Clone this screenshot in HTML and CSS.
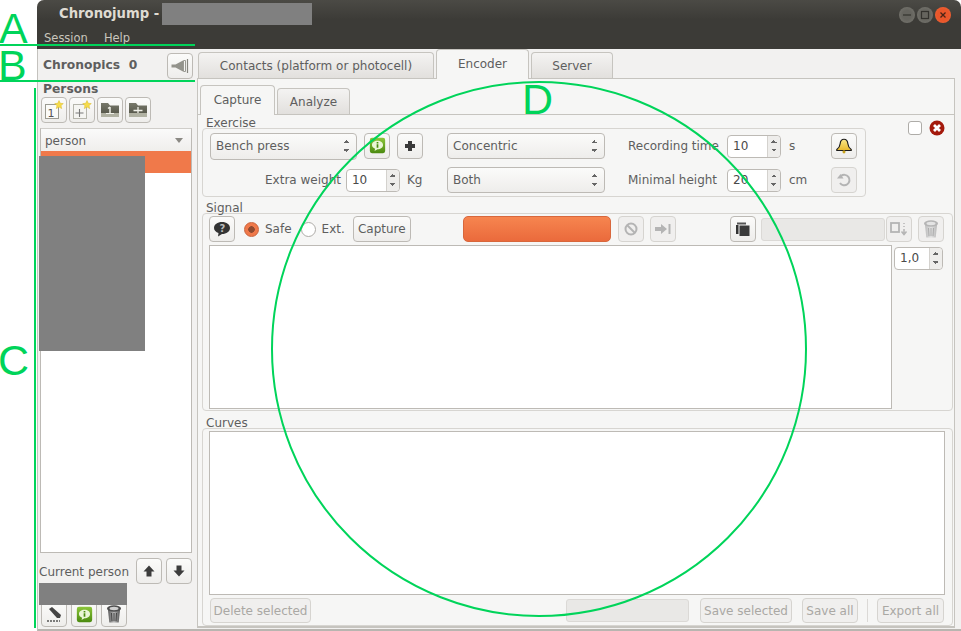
FILE: index.html
```html
<!DOCTYPE html>
<html lang="en">
<head>
    <meta charset="UTF-8">
    <title>Chronojump</title>
    <link rel="stylesheet" href="styles.css">
</head>
<body>
    <svg width="0" height="0" class="defs">
        <defs>
            <linearGradient id="olive" x1="0" y1="0" x2="0" y2="1"><stop offset="0" stop-color="#77786a"/><stop offset="1" stop-color="#4d4e42"/></linearGradient>
            <linearGradient id="gold" x1="0" y1="0" x2="0" y2="1"><stop offset="0" stop-color="#fbe98a"/><stop offset="1" stop-color="#e9b92b"/></linearGradient>
            <linearGradient id="green" x1="0" y1="0" x2="0" y2="1"><stop offset="0" stop-color="#8cc63a"/><stop offset="1" stop-color="#4b8a10"/></linearGradient>
            <linearGradient id="can" x1="0" y1="0" x2="1" y2="0"><stop offset="0" stop-color="#5a5a5a"/><stop offset="0.5" stop-color="#b5b5b5"/><stop offset="1" stop-color="#555"/></linearGradient>
            <linearGradient id="can-off" x1="0" y1="0" x2="1" y2="0"><stop offset="0" stop-color="#bcbcbc"/><stop offset="0.5" stop-color="#e2e2e2"/><stop offset="1" stop-color="#b8b8b8"/></linearGradient>
            <polygon id="star" points="15,0.500 16.300,3.300 19.300,3.600 17,5.600 17.700,8.600 15,7 12.300,8.600 13,5.600 10.700,3.600 13.700,3.300" fill="#f6dc4a" stroke="#d8b92a" stroke-width="0.500"/>
            <g id="info">
                <rect x="1" y="1" width="18" height="18" rx="2.500" fill="url(#green)"/>
                <path d="M10 4.500c3.800 0 6.500 2 6.500 5s-2.700 5-6.500 5l-3.500 2 .7-2.600C5 13 3.500 11.500 3.500 9.500c0-3 2.700-5 6.500-5z" fill="#eaf6d6"/>
                <path d="M10 6v1.500M10 8.500v4" stroke="#4b8a10" stroke-width="2"/>
            </g>
        </defs>
    </svg>

    <div id="window">
        <div id="titlebar">
            <div id="title-row">
                <span id="title">Chronojump -</span>
                <span id="title-hidden"></span>
                <div id="win-buttons">
                    <span class="win-btn"><svg width="10" height="10" viewBox="0 0 10 10"><path d="M1 5h8" stroke="#33322e" stroke-width="1.200"/></svg></span>
                    <span class="win-btn"><svg width="10" height="10" viewBox="0 0 10 10"><rect x="1.500" y="1.500" width="7" height="7" fill="none" stroke="#33322e" stroke-width="1.200"/></svg></span>
                    <span class="win-btn win-close"><svg width="10" height="10" viewBox="0 0 10 10"><path d="M2.500 2.500l5 5M7.500 2.500l-5 5" stroke="#4a2416" stroke-width="1.300"/></svg></span>
                </div>
            </div>
            <div id="menu-row"><span>Session</span><span>Help</span></div>
        </div>

        <div id="content">
            <div id="sidebar">
                <div id="chronopics-row">
                    <b>Chronopics&nbsp;&nbsp;0</b>
                    <button class="btn"><svg width="20" height="18" viewBox="0 0 20 18"><path d="M1.500 7.500h4l7.500-4v11l-7.500-4h-4z" fill="#93938c"/><path d="M13.500 3.500h2v11h-2z" fill="#f4f4f2" stroke="#9a9a93"/><path d="M17.500 2v14" stroke="#85857e" stroke-width="1.200"/></svg></button>
                </div>
                <div class="persons-title">Persons</div>
                <div class="persons-tools">
                    <button class="btn"><svg width="20" height="20" viewBox="0 0 20 20"><rect x="1.500" y="4.500" width="13" height="14" fill="#fbfbf8" stroke="#9b9b92"/><text x="3.500" y="16.500" class="icon-num">1</text><use href="#star"/></svg></button>
                    <button class="btn"><svg width="20" height="20" viewBox="0 0 20 20"><rect x="1.500" y="4.500" width="13" height="14" fill="#f5f5f2" stroke="#b5b5ac"/><path d="M7.500 9v8M3.500 13h8" stroke="#777" stroke-width="1.100"/><use href="#star"/></svg></button>
                    <button class="btn"><svg width="20" height="18" viewBox="0 0 20 18"><path d="M1 2h7l2 2.500h9V16H1z" fill="url(#olive)"/><path d="M1 12h18v4H1z" fill="#b1b2a3"/><path d="M10 6v6.500M8 7.500l2-1.500" stroke="#f0f0e8" stroke-width="1.500" fill="none"/><path d="M6 12.500h8" stroke="#f0f0e8"/></svg></button>
                    <button class="btn"><svg width="20" height="18" viewBox="0 0 20 18"><path d="M1 2h7l2 2.500h9V16H1z" fill="url(#olive)"/><path d="M1 12h18v4H1z" fill="#b1b2a3"/><path d="M10 6v6M5.500 9.500h9" stroke="#f0f0e8" stroke-width="1.300"/></svg></button>
                </div>
                <div id="person-list">
                    <div id="person-head">person<span class="arrow-down"></span></div>
                    <div id="person-selected"></div>
                </div>
                <div id="current-row">
                    <span>Current person</span>
                    <button class="btn"><svg width="14" height="14" viewBox="0 0 14 14"><path d="M7 1.500l5.500 6H9.500v5h-5v-5h-3z" fill="#3c3c3c"/></svg></button>
                    <button class="btn"><svg width="14" height="14" viewBox="0 0 14 14"><path d="M7 12.500l-5.500-6h3v-5h5v5h3z" fill="#3c3c3c"/></svg></button>
                </div>
                <div id="current-hidden"></div>
                <div id="current-tools">
                    <button class="btn"><svg width="20" height="20" viewBox="0 0 20 20"><path d="M5 5l3-2 9 8-1 3-3 0z" fill="#444"/><path d="M3 17h13" stroke="#555" stroke-dasharray="2 1" stroke-width="1.500"/></svg></button>
                    <button class="btn"><svg width="17" height="17" viewBox="0 0 20 20"><use href="#info"/></svg></button>
                    <button class="btn"><svg width="18" height="20" viewBox="0 0 18 20"><path d="M3 6h12l-1.300 12.500H4.300z" fill="url(#can)"/><ellipse cx="9" cy="4.500" rx="7" ry="3.200" fill="#4e4e4e"/><ellipse cx="9" cy="4.500" rx="4.500" ry="1.700" fill="#cfcfcf"/><path d="M6.500 9l.5 8M9 9v8M11.500 9l-.5 8" stroke="#444"/></svg></button>
                </div>
            </div>

            <div id="main">
                <div class="tabs">
                    <span class="tab tab-contacts">Contacts (platform or photocell)</span>
                    <span class="tab tab-active tab-encoder">Encoder</span>
                    <span class="tab tab-server">Server</span>
                </div>
                <div id="encoder-page">
                    <div class="tabs sub-tabs">
                        <span class="tab tab-active tab-capture">Capture</span>
                        <span class="tab tab-analyze">Analyze</span>
                    </div>
                    <div id="capture-page">
                        <div class="frame-title">Exercise</div>
                        <div id="exercise-line">
                            <div class="frame" id="exercise">
                                <div class="ex-left">
                                    <div class="combo combo-bench">Bench press<span class="updown"></span></div>
                                    <button class="btn"><svg width="17" height="17" viewBox="0 0 20 20"><use href="#info"/></svg></button>
                                    <button class="btn"><svg width="14" height="14" viewBox="0 0 14 14"><path d="M5 2h4v3h3v4H9v3H5V9H2V5h3z" fill="#3a3a3a"/></svg></button>
                                </div>
                                <div class="combo">Concentric<span class="updown"></span></div>
                                <label class="ex-label">Recording time</label>
                                <div class="spin"><span class="spin-value">10</span><span class="spin-arrows"></span></div>
                                <span class="unit">s</span>
                                <button class="btn"><svg width="18" height="18" viewBox="0 0 20 20"><path d="M10 2.500c3 0 4 2 4.300 5 .3 3 1.200 4.800 3.700 6.500v1H2v-1c2.500-1.700 3.400-3.500 3.700-6.500.3-3 1.300-5 4.300-5z" fill="url(#gold)" stroke="#1c1c1c" stroke-width="1.300"/><circle cx="10" cy="16.500" r="1.700" fill="#c9a21c"/></svg></button>

                                <div class="ex-left ex-weight">
                                    <label>Extra weight</label>
                                    <div class="spin"><span class="spin-value">10</span><span class="spin-arrows"></span></div>
                                    <span class="unit unit-kg">Kg</span>
                                </div>
                                <div class="combo">Both<span class="updown"></span></div>
                                <label class="ex-label">Minimal height</label>
                                <div class="spin"><span class="spin-value">20</span><span class="spin-arrows"></span></div>
                                <span class="unit">cm</span>
                                <button class="btn btn-off"><svg width="16" height="16" viewBox="0 0 16 16"><path d="M5 4a5.200 5.200 0 1 1 -1 7" fill="none" stroke="#b4b4b4" stroke-width="2"/><path d="M1 6.500l6.500 0-3-4.500z" fill="#b4b4b4"/></svg></button>
                            </div>
                            <div id="corner-tools">
                                <span class="check"></span>
                                <svg width="16" height="16" viewBox="0 0 16 16"><circle cx="8" cy="8" r="7.500" fill="#a41a0c"/><path d="M5 5l6 6M11 5l-6 6" stroke="#fff" stroke-width="2.800"/></svg>
                            </div>
                        </div>

                        <div class="frame-title frame-next">Signal</div>
                        <div class="frame" id="signal">
                            <div class="signal-bar">
                                <button class="btn"><svg width="18" height="16" viewBox="0 0 18 16"><path d="M9 1c4.500 0 8 2.500 8 6s-3.500 6-8 6l-4 2.500.5-3.500C3 11 1 9.500 1 7c0-3.500 3.500-6 8-6z" fill="#333"/><text x="6.500" y="11" class="icon-q">?</text></svg></button>
                                <span class="radio radio-on"></span><span class="radio-label">Safe</span>
                                <span class="radio"></span><span class="radio-label">Ext.</span>
                                <button class="btn btn-text btn-capture">Capture</button>
                                <span id="capture-bar"></span>
                                <button class="btn btn-off"><svg width="16" height="16" viewBox="0 0 16 16"><circle cx="8" cy="8" r="5.500" fill="none" stroke="#b4b4b4" stroke-width="2"/><path d="M4 4l8 8" stroke="#b4b4b4" stroke-width="2"/></svg></button>
                                <button class="btn btn-off"><svg width="18" height="14" viewBox="0 0 18 14"><path d="M1 5h6V2l6 5-6 5V9H1z" fill="#b4b4b4"/><path d="M15.500 2v10" stroke="#b4b4b4" stroke-width="2"/></svg></button>
                                <button class="btn btn-folder"><svg width="16" height="16" viewBox="0 0 16 16"><path d="M2 1.500h9v2H2z" fill="#555"/><rect x="1" y="4" width="2.500" height="9" fill="#333"/><rect x="4.500" y="4.500" width="10" height="10.500" fill="#3a3a3a"/></svg></button>
                                <span class="empty-bar" id="signal-entry"></span>
                                <button class="btn btn-off"><svg width="18" height="16" viewBox="0 0 18 16"><rect x="1" y="2" width="8" height="9" fill="none" stroke="#b4b4b4" stroke-width="1.800"/><path d="M14 2v1M14 5v1M14 8v4M11.500 10.500l2.500 3 2.500-3" stroke="#b4b4b4" stroke-width="1.500" fill="none"/></svg></button>
                                <button class="btn btn-off"><svg width="18" height="20" viewBox="0 0 18 20"><path d="M3 6h12l-1.300 12.500H4.300z" fill="url(#can-off)"/><ellipse cx="9" cy="4.500" rx="7" ry="3.200" fill="#b5b5b5"/><ellipse cx="9" cy="4.500" rx="4.500" ry="1.700" fill="#e4e4e4"/><path d="M6.500 9l.5 8M9 9v8M11.500 9l-.5 8" stroke="#aaa"/></svg></button>
                            </div>
                            <div class="signal-body">
                                <div class="view" id="signal-view"></div>
                                <div class="spin spin-zoom"><span class="spin-value">1,0</span><span class="spin-arrows"></span></div>
                            </div>
                        </div>

                        <div class="frame-title frame-last">Curves</div>
                        <div class="frame" id="curves">
                            <div class="view" id="curves-view"></div>
                            <div class="curves-bar">
                                <button class="btn btn-text btn-off btn-delete">Delete selected</button>
                                <span class="empty-bar" id="curves-entry"></span>
                                <button class="btn btn-text btn-off btn-save-sel">Save selected</button>
                                <button class="btn btn-text btn-off btn-save-all">Save all</button>
                                <span class="vsep"></span>
                                <button class="btn btn-text btn-off btn-export">Export all</button>
                            </div>
                        </div>
                    </div>
                </div>
            </div>
        </div>
    </div>

    <!-- redaction and green notes lie over the window -->
    <div id="hidden-list"></div>
    <svg id="marks" width="961" height="631" viewBox="0 0 961 631">
        <path d="M0 45h195M0 81h195" stroke="#00d45a" stroke-width="2"/>
        <path d="M35 88v540" stroke="#00d45a" stroke-width="2"/>
        <circle cx="539" cy="349" r="267" fill="none" stroke="#00d45a" stroke-width="2"/>
    </svg>
    <span class="mark" id="mark-a">A</span>
    <span class="mark" id="mark-b">B</span>
    <span class="mark" id="mark-c">C</span>
    <span class="mark" id="mark-d">D</span>
</body>
</html>
```

FILE: styles.css
```css
* {
    box-sizing: border-box;
}

body {
    margin: 0;
    width: 961px;
    height: 631px;
    overflow: hidden;
    background: #fff;
    font-family: "DejaVu Sans", sans-serif;
    font-size: 12px;
    color: #5e5e5e;
}

.defs {
    position: absolute;
}

#window {
    margin-left: 37px;
    width: 924px;
    height: 631px;
    display: flex;
    flex-direction: column;
    background: #f2f1f0;
    border-radius: 7px 7px 0 0;
    border-bottom: 2px solid #b8b5b0;
    border-left: 1px solid #c4c2be;
}

#titlebar {
    height: 49px;
    margin-left: -1px;
    background: linear-gradient(#4b4a45, #3c3b37 40%);
    color: #dfdbd2;
    border-radius: 7px 7px 0 0;
}

#title-row {
    height: 27px;
    display: flex;
    align-items: center;
    padding-left: 22px;
}

#title {
    font-weight: bold;
    font-size: 13.200px;
}

#title-hidden {
    width: 150px;
    height: 22px;
    margin-left: 3px;
    background: #808080;
}

#win-buttons {
    margin: 3px 10px 0 auto;
    display: flex;
    gap: 2px;
}

.win-btn {
    width: 16px;
    height: 16px;
    border-radius: 50%;
    background: radial-gradient(circle, #65645e 40%, #7a7972);
    display: flex;
    align-items: center;
    justify-content: center;
}

.win-close {
    background: radial-gradient(circle, #e9562a 50%, #f0683a);
}

#menu-row {
    display: flex;
    gap: 16px;
    padding-left: 7px;
    font-size: 11.500px;
    color: #c9c6bd;
    line-height: 22px;
}

#content {
    flex: 1;
    display: flex;
    min-height: 0;
}

#sidebar {
    width: 159px;
    flex: none;
    padding-left: 1px;
}

#chronopics-row {
    height: 31px;
    display: flex;
    align-items: center;
    justify-content: space-between;
    padding: 2px 4px 0 4px;
}

#chronopics-row b {
    font-size: 12.300px;
    margin-top: -2px;
}

.btn {
    width: 26px;
    height: 26px;
    padding: 0;
    flex: none;
    display: inline-flex;
    align-items: center;
    justify-content: center;
    background: linear-gradient(#fbfbfa, #eeedeb);
    border: 1px solid #bdbab5;
    border-radius: 4px;
    font: inherit;
    color: inherit;
}

.btn-text {
    width: auto;
}

.btn-off {
    background: #f0efee;
    border-color: #d6d4d0;
    color: #aaa8a4;
}

.persons-title {
    font-weight: bold;
    font-size: 12.300px;
    line-height: 16px;
    padding: 1px 0 0 4px;
    height: 17px;
}

.persons-tools {
    display: flex;
    gap: 2px;
    padding-left: 2px;
}

#person-list {
    width: 152px;
    height: 425px;
    margin: 5px 0 0 1px;
    background: #fff;
    border: 1px solid #bdbab5;
    border-top-color: #cfcdc9;
}

#person-head {
    height: 22px;
    line-height: 22px;
    padding: 1px 8px 0 4px;
    display: flex;
    justify-content: space-between;
    align-items: center;
    background: linear-gradient(#fafafa, #efeeec);
}

.arrow-down {
    border: 4px solid transparent;
    border-top: 5px solid #8b8984;
    border-bottom: 0;
}

#person-selected {
    height: 22px;
    background: #f0794a;
}

#current-row {
    display: flex;
    align-items: center;
    margin-top: 5px;
}

#current-row span {
    width: 97px;
    margin-top: 2px;
    white-space: nowrap;
}

#current-row .btn + .btn {
    margin-left: 4px;
}

#current-hidden {
    width: 88px;
    height: 22px;
    margin-top: -1px;
    background: #808080;
    position: relative;
    z-index: 1;
}

#current-tools {
    display: flex;
    gap: 4px;
    padding-left: 2px;
    margin-top: -4px;
}

#main {
    width: 758px;
}

.tabs {
    display: flex;
    align-items: flex-end;
    height: 29px;
    margin-left: 1px;
}

.tab {
    height: 26px;
    line-height: 26px;
    text-align: center;
    background: linear-gradient(#f4f3f2, #e2e0dd);
    border: 1px solid #c6c4bf;
    border-bottom: 0;
    border-radius: 4px 4px 0 0;
    margin-right: 2px;
}

.tab-active {
    height: 30px;
    line-height: 28px;
    background: #f6f6f5;
    position: relative;
    z-index: 1;
    margin-bottom: -1px;
}

.tab-contacts {
    width: 236px;
}

.tab-encoder {
    width: 93px;
}

.tab-server {
    width: 82px;
}

.sub-tabs {
    margin-left: 2px;
    margin-top: 6px;
}

.tab-capture {
    width: 75px;
}

.tab-analyze {
    width: 73px;
}

#encoder-page {
    height: 550px;
    background: #f6f6f5;
    border: 1px solid #c6c4bf;
    border-bottom: 2px solid #c6c4bf;
}

#capture-page {
    border-top: 1px solid #c6c4bf;
    padding: 2px 0 0 4px;
}

.frame-title {
    height: 12px;
    line-height: 12px;
    margin: 0 0 -1px 4px;
    position: relative;
    z-index: 1;
}

.frame-next {
    margin-top: 5px;
}

.frame-last {
    margin-top: 6px;
}

.frame {
    border: 1px solid #d7d5d1;
    border-radius: 4px;
}

#exercise-line {
    display: flex;
}

#exercise {
    width: 664px;
    height: 69px;
    display: grid;
    grid-template-columns: 237px 158px 122px 54px 50px 26px;
    grid-template-rows: 26px 26px;
    row-gap: 8px;
    align-items: center;
    padding: 4px 0 0 7px;
}

.ex-left {
    display: flex;
    gap: 7px;
}

.ex-weight {
    align-items: center;
    gap: 5px;
    padding-left: 55px;
}

.ex-label {
    margin-left: 23px;
    white-space: nowrap;
}

.unit {
    margin-left: 8px;
}

.unit-kg {
    margin-left: 2px;
}

.combo {
    height: 26px;
    padding: 0 7px 0 5px;
    display: flex;
    align-items: center;
    justify-content: space-between;
    background: linear-gradient(#fbfbfa, #eeedeb);
    border: 1px solid #bdbab5;
    border-radius: 4px;
}

.combo-bench {
    width: 147px;
    height: 27px;
}

.updown {
    width: 6px;
    height: 12px;
    background:
        linear-gradient(135deg, transparent 50%, #666 50%) left top / 3px 3px no-repeat,
        linear-gradient(225deg, transparent 50%, #666 50%) right top / 3px 3px no-repeat,
        linear-gradient(45deg, transparent 50%, #666 50%) left bottom / 3px 3px no-repeat,
        linear-gradient(315deg, transparent 50%, #666 50%) right bottom / 3px 3px no-repeat;
}

.spin {
    width: 54px;
    height: 23px;
    display: flex;
    background: #fff;
    border: 1px solid #bdbab5;
    border-radius: 4px;
}

.spin-value {
    flex: 1;
    line-height: 21px;
    padding-left: 5px;
    color: #4a4a4a;
}

.spin-arrows {
    width: 13px;
    background:
        linear-gradient(135deg, transparent 50%, #666 50%) 3px 4px / 3px 3px no-repeat,
        linear-gradient(225deg, transparent 50%, #666 50%) 6px 4px / 3px 3px no-repeat,
        linear-gradient(45deg, transparent 50%, #666 50%) 3px 13px / 3px 3px no-repeat,
        linear-gradient(315deg, transparent 50%, #666 50%) 6px 13px / 3px 3px no-repeat,
        #eeedeb;
    border-left: 1px solid #d4d2ce;
    border-radius: 0 4px 4px 0;
}

#corner-tools {
    display: flex;
    align-items: center;
    gap: 7px;
    height: 16px;
    margin: -8px 0 0 42px;
    position: relative;
    z-index: 1;
}

.check {
    width: 14px;
    height: 14px;
    background: #fff;
    border: 1px solid #aeaca8;
    border-radius: 3px;
}

#signal {
    width: 751px;
    height: 198px;
    padding: 2px 0 0 6px;
}

.signal-bar {
    display: flex;
    align-items: center;
    height: 26px;
}

.radio {
    width: 15px;
    height: 15px;
    margin-left: 9px;
    flex: none;
    background: #fff;
    border: 1px solid #aeaca8;
    border-radius: 50%;
}

.radio-on {
    background: radial-gradient(circle, #8f4a30 0 3px, #f0794a 3.500px);
    border-color: #c9623a;
}

.radio-label {
    margin-left: 6px;
}

.btn-capture {
    margin-left: 8px;
    width: 58px;
}

#capture-bar {
    width: 148px;
    height: 26px;
    margin-left: 52px;
    background: linear-gradient(#f6854f, #ea6a3c);
    border: 1px solid #d8673c;
    border-radius: 5px;
}

#capture-bar + .btn {
    margin-left: 7px;
}

#capture-bar + .btn + .btn {
    margin-left: 6px;
}

.btn-folder {
    margin-left: 54px;
}

.empty-bar {
    height: 23px;
    background: #e9e8e6;
    border: 1px solid #dbd9d6;
    border-radius: 3px;
}

#signal-entry {
    width: 124px;
    margin: 0 1px 0 5px;
}

#signal-entry + .btn + .btn {
    margin-left: 6px;
}

.signal-body {
    display: flex;
    align-items: flex-start;
    gap: 2px;
    margin-top: 3px;
}

.view {
    background: #fff;
    border: 1px solid #bdbab5;
}

#signal-view {
    width: 683px;
    height: 164px;
}

.spin-zoom {
    width: 49px;
    margin-top: 2px;
}

#curves {
    width: 751px;
    height: 198px;
    padding: 2px 0 0 6px;
}

#curves-view {
    width: 736px;
    height: 164px;
}

.curves-bar {
    display: flex;
    align-items: center;
    height: 25px;
    margin-top: 3px;
    padding-left: 1px;
    width: 735px;
}

.curves-bar .btn {
    height: 25px;
}

.btn-delete {
    width: 101px;
}

.btn-save-sel {
    width: 92px;
}

.btn-save-all {
    width: 56px;
    margin-left: 10px;
}

.btn-export {
    width: 67px;
}

#curves-entry {
    width: 123px;
    margin: 0 11px 0 auto;
}

.vsep {
    width: 1px;
    height: 23px;
    margin: 0 9px;
    background: #dbd9d6;
}

.icon-num {
    font-size: 11px;
    fill: #555;
}

.icon-q {
    font-size: 10px;
    font-weight: bold;
    fill: #bbb;
}

#hidden-list {
    position: absolute;
    left: 39px;
    top: 156px;
    width: 106px;
    height: 195px;
    background: #808080;
}

#marks {
    position: absolute;
    left: 0;
    top: 0;
    pointer-events: none;
}

.mark {
    position: absolute;
    font-family: "Liberation Sans", sans-serif;
    font-size: 43px;
    line-height: 43px;
    color: #00d45a;
}

#mark-a {
    left: -1px;
    top: 7px;
}

#mark-b {
    left: -2px;
    top: 44px;
}

#mark-c {
    left: -2px;
    top: 339px;
}

#mark-d {
    left: 522px;
    top: 78px;
}
```
